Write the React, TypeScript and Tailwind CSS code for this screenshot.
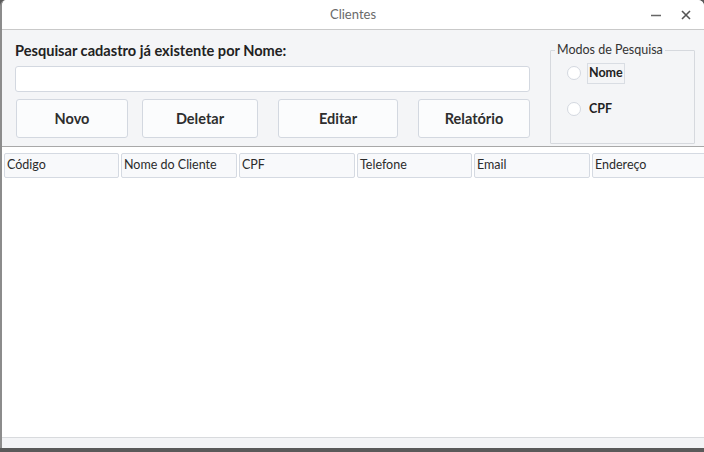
import React from "react";

const font = { fontFamily: "Lato, 'Noto Sans', sans-serif" };

function Btn({ label, w }: { label: string; w: string }) {
  return (
    <div
      className={`${w} h-[39px] flex items-center justify-center rounded-[3px] border border-[#d3d8e0] bg-[#fbfcfd] text-[14.5px] font-bold text-[#2e2e2e]`}
    >
      {label}
    </div>
  );
}

function Head({ label, w }: { label: string; w: string }) {
  return (
    <div
      className={`${w} h-[25px] shrink-0 flex items-center pl-[2px] rounded-[2px] border border-[#d5dae2] bg-[#f8f9fb] text-[12.5px] text-[#2b2b2b]`}
    >
      {label}
    </div>
  );
}

function Radio({ label, focus }: { label: string; focus?: boolean }) {
  return (
    <div className="flex items-center gap-[6px]">
      <div className="w-[14px] h-[14px] rounded-full border border-[#d4d8e0] bg-white" />
      <div
        className={`text-[12.5px] font-bold text-[#222] px-[1px] ${focus ? "border border-[#d9dde3]" : "border border-transparent"}`}
      >
        {label}
      </div>
    </div>
  );
}

export default function App() {
  return (
    <div className="w-[704px] h-[452px] bg-[#5a5a5a] flex flex-col" style={font}>
      <div className="h-[448px] flex flex-col bg-white rounded-t-[6px] overflow-hidden border-l-2 border-[#8c8c8c]">
        {/* title bar */}
        <div className="h-[30px] shrink-0 flex items-center relative bg-white border-b border-[#c9c9c9]">
          <div className="flex-1 text-center text-[13px] text-[#6a6a6a]">Clientes</div>
          <div className="absolute right-[12px] top-[7px] flex items-center gap-[18px] text-[#555]">
            <svg width="12" height="16" viewBox="0 0 12 16">
              <path d="M1 8.5h10" stroke="#666" strokeWidth="1.6" />
            </svg>
            <svg width="12" height="16" viewBox="0 0 12 16">
              <path d="M2 4l8 8M10 4l-8 8" stroke="#555" strokeWidth="1.6" />
            </svg>
          </div>
        </div>
        {/* top panel */}
        <div className="h-[117px] shrink-0 bg-[#f4f5f7] flex border-b border-[#a8a8a8]">
          <div className="w-[533px] pl-[13px] pt-[12px] flex flex-col">
            <div className="text-[14.6px] font-bold text-[#222] leading-[18px]">
              Pesquisar cadastro já existente por Nome:
            </div>
            <div className="mt-[6px] w-[515px] h-[26px] rounded-[3px] border border-[#d3d8e0] bg-white" />
            <div className="mt-[7px] flex">
              <div className="ml-[1px]"><Btn label="Novo" w="w-[112px]" /></div>
              <div className="ml-[14px]"><Btn label="Deletar" w="w-[116px]" /></div>
              <div className="ml-[20px]"><Btn label="Editar" w="w-[120px]" /></div>
              <div className="ml-[20px]"><Btn label="Relatório" w="w-[112px]" /></div>
            </div>
          </div>
          <div className="pl-[15px] pt-[20px]">
            <div className="relative w-[145px] h-[94px] border border-[#d6d9de] rounded-[1px]">
              <div className="absolute -top-[9px] left-[4px] px-[2px] bg-[#f4f5f7] text-[12.5px] leading-[16px] text-[#333]">
                Modos de Pesquisa
              </div>
              <div className="pt-[12px] pl-[16px] flex flex-col gap-[15px]">
                <Radio label="Nome" focus />
                <Radio label="CPF" />
              </div>
            </div>
          </div>
        </div>
        {/* table */}
        <div className="flex-1 bg-white border-b border-[#d8dadd] pt-[6px] pl-[2px]">
          <div className="flex gap-[2px]">
            <Head label="Código" w="w-[115px]" />
            <Head label="Nome do Cliente" w="w-[116px]" />
            <Head label="CPF" w="w-[116px]" />
            <Head label="Telefone" w="w-[115px]" />
            <Head label="Email" w="w-[116px]" />
            <Head label="Endereço" w="w-[115px]" />
          </div>
        </div>
        <div className="h-[10px] shrink-0 bg-[#f3f4f6]" />
      </div>
    </div>
  );
}
